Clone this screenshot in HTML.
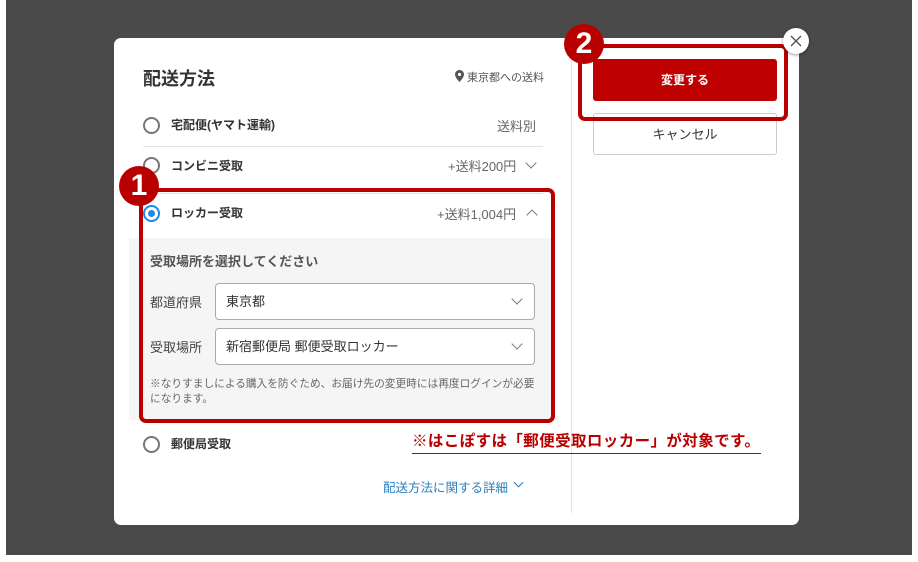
<!DOCTYPE html>
<html><head><meta charset="utf-8"><style>
*{box-sizing:border-box;margin:0;padding:0}
body{width:918px;height:562px;background:#fff;position:relative;overflow:hidden;font-family:"Liberation Sans","Noto Sans CJK JP",sans-serif;color:#333}
.bg{position:absolute;left:6px;top:0;width:906px;height:555px;background:#4a4a4a}
.modal{position:absolute;left:114px;top:38px;width:685px;height:487px;background:#fff;border-radius:7px}
.abs{position:absolute}
.t{position:absolute;white-space:nowrap}
.radio{position:absolute;width:17px;height:17px;border:2px solid #777;border-radius:50%;background:#fff}
.radio.on{border-color:#1e88e5}
.radio.on::after{content:"";position:absolute;left:3px;top:3px;width:7px;height:7px;border-radius:50%;background:#1e88e5}
.sel{position:absolute;left:215px;width:320px;height:37px;border:1px solid #aaa;border-radius:4px;background:#fff}
.chev{position:absolute;width:8px;height:8px;border-right:1.3px solid #777;border-bottom:1.3px solid #777;transform:rotate(45deg)}
.up{transform:rotate(-135deg)}
.badge{position:absolute;width:40px;height:40px;border-radius:50%;background:#b90000;color:#fff;font-weight:bold;font-size:30px;text-align:center;line-height:40px}
</style></head><body>
<div class="bg"></div>
<div class="modal"></div>
<div class="abs" style="left:571px;top:38px;width:1px;height:475px;background:#e3e3e3"></div>

<div class="t" style="left:143px;top:65px;font-size:18px;font-weight:bold;color:#333">配送方法</div>
<svg class="abs" style="left:455px;top:70px" width="9" height="12" viewBox="0 0 9 12"><path d="M4.5 0C2 0 0 2 0 4.5 0 7.5 4.5 12 4.5 12S9 7.5 9 4.5C9 2 7 0 4.5 0z" fill="#555"/><circle cx="4.5" cy="4.5" r="1.6" fill="#fff"/></svg>
<div class="t" style="left:467px;top:69px;font-size:11px;color:#555">東京都への送料</div>

<div class="radio" style="left:143px;top:117px"></div>
<div class="t" style="left:171px;top:116px;font-size:12px;font-weight:bold;color:#333">宅配便(ヤマト運輸)</div>
<div class="t" style="left:497px;top:116px;font-size:13px;color:#666">送料別</div>
<div class="abs" style="left:143px;top:146px;width:400px;height:1px;background:#e3e3e3"></div>

<div class="radio" style="left:143px;top:157px"></div>
<div class="t" style="left:171px;top:157px;font-size:12px;font-weight:bold;color:#333">コンビニ受取</div>
<div class="t" style="left:448px;top:156px;font-size:13px;color:#666">+送料200円</div>
<div class="chev" style="left:527px;top:159px"></div>
<div class="abs" style="left:143px;top:193px;width:400px;height:1px;background:#e3e3e3"></div>

<div class="radio on" style="left:143px;top:205px"></div>
<div class="t" style="left:171px;top:204px;font-size:12px;font-weight:bold;color:#333">ロッカー受取</div>
<div class="t" style="left:437px;top:204px;font-size:13px;color:#666">+送料1,004円</div>
<div class="chev up" style="left:528px;top:211px"></div>

<div class="abs" style="left:129px;top:238px;width:423px;height:182px;background:#f5f5f5"></div>
<div class="t" style="left:150px;top:251px;font-size:13px;font-weight:bold;color:#555">受取場所を選択してください</div>
<div class="t" style="left:150px;top:292px;font-size:13px;color:#444">都道府県</div>
<div class="sel" style="top:283px"></div>
<div class="t" style="left:226px;top:291px;font-size:13px;color:#333">東京都</div>
<div class="chev" style="left:513px;top:295px"></div>
<div class="t" style="left:150px;top:337px;font-size:13px;color:#444">受取場所</div>
<div class="sel" style="top:328px"></div>
<div class="t" style="left:226px;top:336px;font-size:13px;color:#333">新宿郵便局 郵便受取ロッカー</div>
<div class="chev" style="left:513px;top:340px"></div>
<div class="t" style="left:150px;top:377px;font-size:10.7px;line-height:15px;color:#666;white-space:normal;width:420px">※なりすましによる購入を防ぐため、お届け先の変更時には再度ログインが必要<br>になります。</div>

<div class="abs" style="left:139px;top:188px;width:416px;height:235px;border:4px solid #b90000;border-radius:7px"></div>
<div class="badge" style="left:119px;top:166px">1</div>

<div class="radio" style="left:143px;top:436px"></div>
<div class="t" style="left:171px;top:435px;font-size:12px;font-weight:bold;color:#333">郵便局受取</div>
<div class="t" style="left:412px;top:429px;font-size:15.5px;letter-spacing:0.4px;font-weight:bold;color:#b90000;border-bottom:1px solid #b90000;padding-bottom:2px;width:349px">※はこぽすは「郵便受取ロッカー」が対象です。</div>

<div class="t" style="left:383px;top:477px;font-size:12.5px;color:#2a7fc0">配送方法に関する詳細</div>
<div class="chev" style="left:515px;top:479px;border-color:#2a7fc0;width:7px;height:7px"></div>

<div class="abs" style="left:593px;top:59px;width:184px;height:42px;background:#bf0000;border-radius:3px"></div>
<div class="t" style="left:593px;top:71px;width:184px;text-align:center;font-size:12px;font-weight:bold;color:#fff">変更する</div>
<div class="abs" style="left:593px;top:113px;width:184px;height:42px;border:1px solid #ccc;border-radius:3px;background:#fff"></div>
<div class="t" style="left:593px;top:124px;width:184px;text-align:center;font-size:13px;color:#333">キャンセル</div>
<div class="abs" style="left:578px;top:44px;width:210px;height:77px;border:4px solid #b90000;border-radius:7px"></div>
<div class="badge" style="left:564px;top:24px">2</div>

<div class="abs" style="left:783px;top:28px;width:26px;height:26px;border-radius:50%;background:#fff;box-shadow:0 1px 3px rgba(0,0,0,.4)"></div>
<svg class="abs" style="left:789px;top:34px" width="14" height="14" viewBox="0 0 14 14"><path d="M2 2L12 12M12 2L2 12" stroke="#555" stroke-width="1.4"/></svg>
</body></html>
